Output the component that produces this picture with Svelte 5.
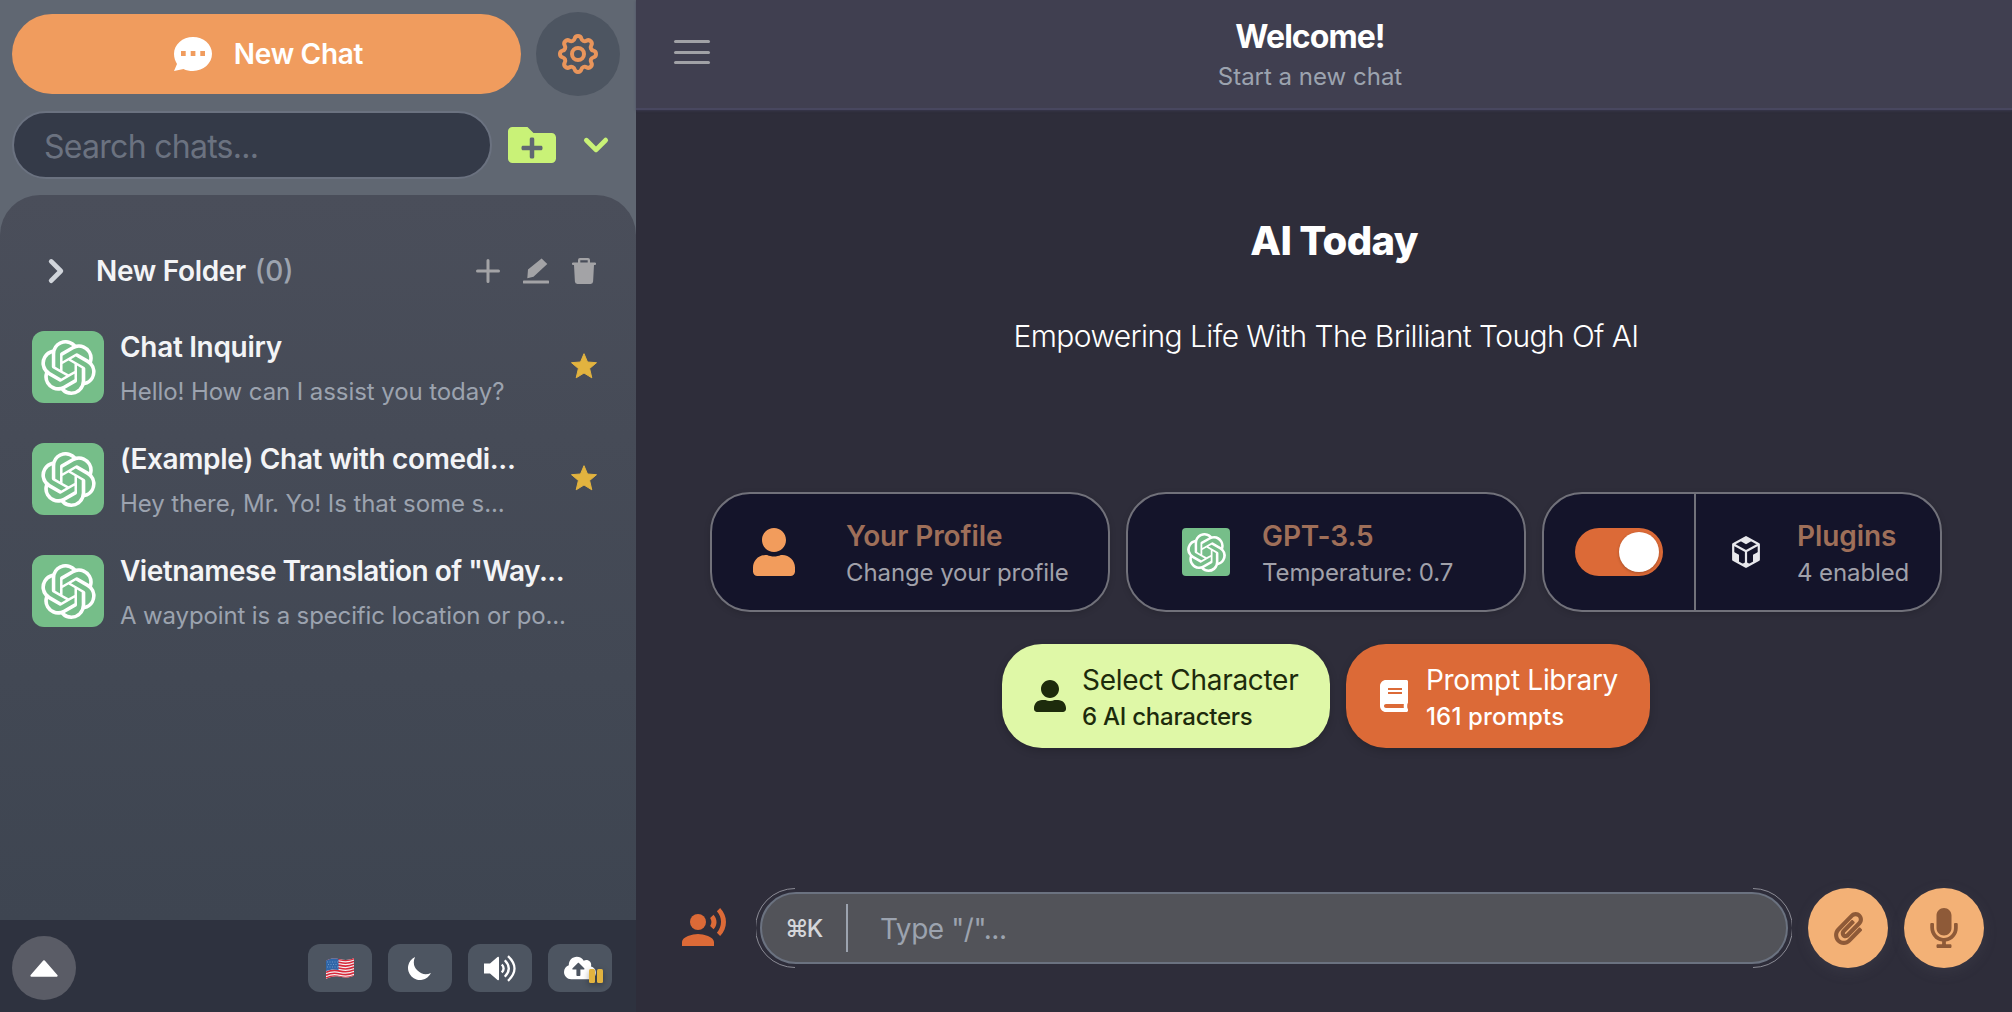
<script>
  const chats = [
    { title: 'Chat Inquiry', text: 'Hello! How can I assist you today?', starred: true, t: 't1', s: 's1' },
    { title: '(Example) Chat with comedi...', text: 'Hey there, Mr. Yo! Is that some s...', starred: true, t: 't2', s: 's2' },
    { title: 'Vietnamese Translation of "Way...', text: 'A waypoint is a specific location or po...', starred: false, t: 't3', s: 's3' }
  ];
  const knot =
    'M22.2819 9.8211a5.9847 5.9847 0 0 0-.5157-4.9108 6.0462 6.0462 0 0 0-6.5098-2.9A6.0651 6.0651 0 0 0 4.9807 4.1818a5.9847 5.9847 0 0 0-3.9977 2.9 6.0462 6.0462 0 0 0 .7427 7.0966 5.98 5.98 0 0 0 .511 4.9107 6.051 6.051 0 0 0 6.5146 2.9001A5.9847 5.9847 0 0 0 13.2599 24a6.0557 6.0557 0 0 0 5.7718-4.2058 5.9894 5.9894 0 0 0 3.9977-2.9001 6.0557 6.0557 0 0 0-.7475-7.0729zm-9.022 12.6081a4.4755 4.4755 0 0 1-2.8764-1.0408l.1419-.0804 4.7783-2.7582a.7948.7948 0 0 0 .3927-.6813v-6.7369l2.02 1.1686a.071.071 0 0 1 .038.052v5.5826a4.504 4.504 0 0 1-4.4945 4.4944zm-9.6607-4.1254a4.4708 4.4708 0 0 1-.5346-3.0137l.142.0852 4.783 2.7582a.7712.7712 0 0 0 .7806 0l5.8428-3.3685v2.3324a.0804.0804 0 0 1-.0332.0615L9.74 19.9502a4.4992 4.4992 0 0 1-6.1408-1.6464zM2.3408 7.8956a4.485 4.485 0 0 1 2.3655-1.9728V11.6a.7664.7664 0 0 0 .3879.6765l5.8144 3.3543-2.0201 1.1685a.0757.0757 0 0 1-.071 0l-4.8303-2.7865A4.504 4.504 0 0 1 2.3408 7.872zm16.5963 3.8558L13.1038 8.364 15.1192 7.2a.0757.0757 0 0 1 .071 0l4.8303 2.7913a4.4944 4.4944 0 0 1-.6765 8.1042v-5.6772a.79.79 0 0 0-.407-.667zm2.0107-3.0231l-.142-.0852-4.7735-2.7818a.7759.7759 0 0 0-.7854 0L9.409 9.2297V6.8974a.0662.0662 0 0 1 .0284-.0615l4.8303-2.7866a4.4992 4.4992 0 0 1 6.6802 4.66zM8.3065 12.863l-2.02-1.1638a.0804.0804 0 0 1-.038-.0567V6.0742a4.4992 4.4992 0 0 1 7.3757-3.4537l-.142.0805L8.704 5.459a.7948.7948 0 0 0-.3927.6813zm1.0976-2.3654l2.602-1.4998 2.6069 1.4998v2.9994l-2.5974 1.4997-2.6067-1.4997Z';
  const stripes = [0, 1, 2, 3, 4, 5, 6];
</script>

{#snippet logo(cls)}
  <span class="logo {cls}"><svg viewBox="0 0 24 24"><path fill="#fff" d={knot} /></svg></span>
{/snippet}

<div class="app">
  <aside>
    <div class="top">
      <button class="new">
        <svg class="bubble" viewBox="0 0 38 34"><path fill="#fff" fill-rule="evenodd" d="M19 0C8.500 0 0 7.500 0 16.800c0 4.200 1.400 7.600 3 10.200L0 34l9.500-2.100C12.200 33.200 15.400 34 19 34c10.500 0 19-7.700 19-17.200S29.500 0 19 0ZM7 14h4.700v5H7zM16.700 14h4.700v5h-4.700zM26.300 14H31v5h-4.700z" /></svg>
        <span>New Chat</span>
      </button>
      <button class="gear" aria-label="Settings">
        <svg viewBox="0 0 24 24" fill="none" stroke="#e9955b" stroke-width="2" stroke-linejoin="round"><path d="M10.325 4.317c.426-1.756 2.924-1.756 3.35 0a1.724 1.724 0 002.573 1.066c1.543-.94 3.31.826 2.37 2.37a1.724 1.724 0 001.065 2.572c1.756.426 1.756 2.924 0 3.35a1.724 1.724 0 00-1.066 2.573c.94 1.543-.826 3.31-2.37 2.37a1.724 1.724 0 00-2.572 1.065c-.426 1.756-2.924 1.756-3.35 0a1.724 1.724 0 00-2.573-1.066c-1.543.94-3.31-.826-2.37-2.37a1.724 1.724 0 00-1.065-2.572c-1.756-.426-1.756-2.924 0-3.35a1.724 1.724 0 001.066-2.573c-.94-1.543.826-3.31 2.37-2.37.996.608 2.296.07 2.572-1.065z" /><circle cx="12" cy="12" r="3" /></svg>
      </button>
    </div>
    <div class="find">
      <div class="search"><span>Search chats...</span></div>
      <svg class="folder" viewBox="0 64 512 384"><path fill="#c9f277" d="M464 128H272l-64-64H48C21.490 64 0 85.490 0 112v288c0 26.510 21.490 48 48 48h416c26.510 0 48-21.490 48-48V176c0-26.510-21.490-48-48-48zm-96 168c0 8.840-7.160 16-16 16h-72v72c0 8.840-7.160 16-16 16h-16c-8.840 0-16-7.160-16-16v-72h-72c-8.840 0-16-7.160-16-16v-16c0-8.840 7.160-16 16-16h72v-72c0-8.840 7.160-16 16-16h16c8.840 0 16 7.160 16 16v72h72c8.840 0 16 7.160 16 16v16z" /></svg>
      <svg class="down" viewBox="0 0 20 20"><path fill="#c9f277" d="M5.293 7.293a1 1 0 011.414 0L10 10.586l3.293-3.293a1 1 0 111.414 1.414l-4 4a1 1 0 01-1.414 0l-4-4a1 1 0 010-1.414z" /></svg>
    </div>

    <div class="panel">
      <div class="group">
        <svg class="right" viewBox="0 0 20 20"><path fill="#d1d5db" d="M7.293 14.707a1 1 0 010-1.414L10.586 10 7.293 6.707a1 1 0 011.414-1.414l4 4a1 1 0 010 1.414l-4 4a1 1 0 01-1.414 0z" /></svg>
        <span class="gname">New Folder</span><span class="count">(0)</span>
        <div class="tools">
          <svg width="24" height="24" viewBox="0 0 24 24"><path stroke="#a3a3a6" stroke-width="3" stroke-linecap="round" d="M12 1.500v21M1.500 12h21" /></svg>
          <svg width="26" height="26" viewBox="0 0 26 26"><path fill="#a3a3a6" d="M18.600.600 24.300 6 10.500 18.800 4.300 20.300 5 11.500zM1 22.500h24a1 1 0 0 1 0 3H1a1 1 0 0 1 0-3Z" /></svg>
          <svg width="24" height="26" viewBox="0 0 24 26"><path fill="#a3a3a6" fill-rule="evenodd" d="M6 2a2 2 0 0 1 2-2h8a2 2 0 0 1 2 2v2.500h5a1 1 0 0 1 0 2.500H1a1 1 0 0 1 0-2.500h5zM8.300 2.300v2.200h7.400V2.300zM2 7h20l-.9 16.600A2.500 2.500 0 0 1 18.600 26H5.400a2.500 2.500 0 0 1-2.500-2.400z" /></svg>
        </div>
      </div>
      {#each chats as c}
        <div class="chat">
          {@render logo('big')}
          <div class="words">
            <div class="title {c.t}">{c.title}</div>
            <div class="sub {c.s}">{c.text}</div>
          </div>
          {#if c.starred}
            <svg class="star" viewBox="0 0 26 26"><path fill="#e2b33f" stroke="#e2b33f" stroke-width="1" stroke-linejoin="round" d="m13 .7 3.500 8.300 9 .7-6.900 5.800 2.200 9.300L13 20l-7.800 4.800 2.200-9.300L.5 9.700l9-.7z" /></svg>
          {/if}
        </div>
      {/each}
    </div>

    <footer>
      <button class="up" aria-label="Expand"><svg width="28" height="17" viewBox="0 0 28 17"><path fill="#fff" stroke="#fff" stroke-width="2" stroke-linejoin="round" d="M14 1.200 26.600 15.700H1.400z" /></svg></button>
      <div class="minis">
        <button class="mini" aria-label="Language">
          <svg width="28" height="23" viewBox="0 0 28 23">
            <defs><clipPath id="flag"><path d="M0 3.500C5 1 9 1 14 2.200S23 3.400 28 1v17.500c-5 2.600-9 2.300-14 1.300S5 19.500 0 22z" /></clipPath></defs>
            <g clip-path="url(#flag)">
              <rect width="28" height="23" fill="#f4f1f2" />
              {#each stripes as i}
                <path fill="none" stroke="#d9283a" stroke-width="1.600" d="M0 {4 + i * 2.850}c5-2.500 9-2.500 14-1.300s9 1.200 14-1.200" />
              {/each}
              <path fill="#2f66a8" d="M0 0h12.500v13C8 12 4 12.500 0 14z" />
              <path stroke="#7ba3d2" stroke-width=".8" stroke-dasharray="1 1.500" d="M1 5h11M2 7.500h10M1 10h11" />
            </g>
          </svg>
        </button>
        <button class="mini" aria-label="Dark mode"><svg width="30" height="30" viewBox="0 0 20 20"><path fill="#fff" d="M17.293 13.293A8 8 0 016.707 2.707a8.001 8.001 0 1010.586 10.586z" /></svg></button>
        <button class="mini" aria-label="Sound">
          <svg width="33" height="27" viewBox="0 0 33 27"><path fill="#fff" d="M0 8.500h6L13.500 2Q15 1 15 3v21q0 2-1.500 1L6 18.500H0z" /><path fill="none" stroke="#fff" stroke-width="2.300" d="M17.800 9.500q3.600 4 0 8M20.800 5.200q8 8.300 0 16.600M24 1.200q13 12.300 0 24.600" /></svg>
        </button>
        <button class="mini cloud" aria-label="Cloud sync">
          <svg width="32" height="26" viewBox="0 0 640 512"><path fill="#fff" d="M537.6 226.6c4.1-10.7 6.4-22.4 6.4-34.6 0-53-43-96-96-96-19.7 0-38.1 6-53.3 16.200C367 64.200 315.300 32 256 32c-88.400 0-160 71.600-160 160 0 2.700.1 5.400.2 8.100C40.200 219.800 0 273.200 0 336c0 79.500 64.500 144 144 144h368c70.700 0 128-57.300 128-128 0-61.900-44-113.600-102.400-125.400zM393.400 288H328v112c0 8.800-7.200 16-16 16h-48c-8.800 0-16-7.200-16-16V288h-65.400c-14.300 0-21.400-17.200-11.300-27.400l105.400-105.400c6.200-6.200 16.400-6.200 22.600 0l105.400 105.400c10.100 10.100 2.900 27.400-11.300 27.400z" /></svg>
          <span class="pause"><i></i><i></i></span>
        </button>
      </div>
    </footer>
  </aside>

  <main>
    <header>
      <div class="burger"><i></i><i></i><i></i></div>
      <div class="heading">
        <div class="welcome">Welcome!</div>
        <div class="start">Start a new chat</div>
      </div>
    </header>

    <h1>AI Today</h1>
    <h2>Empowering Life With The Brilliant Tough Of AI</h2>

    <div class="cards">
      <div class="card profile">
        <svg width="42" height="48" viewBox="0 0 448 512"><path fill="#f29c5c" d="M224 256c70.700 0 128-57.300 128-128S294.700 0 224 0 96 57.300 96 128s57.300 128 128 128zm89.600 32h-16.700c-22.200 10.200-46.900 16-72.900 16s-50.600-5.800-72.900-16h-16.700C60.200 288 0 348.200 0 422.400V464c0 26.500 21.500 48 48 48h352c26.500 0 48-21.500 48-48v-41.600c0-74.200-60.200-134.400-134.400-134.400z" /></svg>
        <div><div class="ct">Your Profile</div><div class="cs">Change your profile</div></div>
      </div>
      <div class="card model">
        {@render logo('small')}
        <div><div class="ct">GPT-3.5</div><div class="cs">Temperature: 0.7</div></div>
      </div>
      <div class="card plugins">
        <div class="switch"><div class="track"><i></i></div></div>
        <div class="plug">
          <svg width="28" height="32" viewBox="0 0 28 32">
            <path fill="none" stroke="#e8e8ec" stroke-width="2.200" stroke-linejoin="round" d="M14 1.300 26.800 8.300v15.400L14 30.700 1.200 23.700V8.300zM1.200 8.300 14 15.300l12.800-7M14 15.300v15.400" />
            <path fill="#e8e8ec" d="M14 .5 20.500 4.500 17 6.500 14 8.200 11 6.500 7.500 4.500zM1 15.500l6 3.300v7.500L1 23.500zM27 15.500l-6 3.300v7.500l6-2.800zM14 26l4 2-4 3.500L10 28z" />
          </svg>
          <div><div class="ct">Plugins</div><div class="cs">4 enabled</div></div>
        </div>
      </div>
    </div>

    <div class="actions">
      <button class="act lime">
        <svg width="32" height="32" viewBox="0 0 512 512"><path fill="#1d2b0c" d="M256 288c79.500 0 144-64.500 144-144S335.500 0 256 0 112 64.500 112 144s64.500 144 144 144zm128 32h-55.100c-22.200 10.200-46.900 16-72.900 16s-50.600-5.800-72.900-16H128C57.300 320 0 377.300 0 448v16c0 26.500 21.500 48 48 48h416c26.500 0 48-21.500 48-48v-16c0-70.700-57.300-128-128-128z" /></svg>
        <span class="lines"><span class="at">Select Character</span><span class="as a2">6 AI characters</span></span>
      </button>
      <button class="act rust">
        <svg width="28" height="32" viewBox="0 0 448 512"><path fill="#fff" d="M448 360V24c0-13.300-10.700-24-24-24H96C43 0 0 43 0 96v320c0 53 43 96 96 96h328c13.300 0 24-10.700 24-24v-16c0-7.500-3.500-14.300-8.900-18.700-4.200-15.400-4.200-59.300 0-74.700 5.400-4.300 8.900-11.100 8.900-18.600zM128 134c0-3.300 2.700-6 6-6h212c3.300 0 6 2.700 6 6v20c0 3.300-2.700 6-6 6H134c-3.300 0-6-2.700-6-6v-20zm0 64c0-3.300 2.700-6 6-6h212c3.300 0 6 2.700 6 6v20c0 3.300-2.700 6-6 6H134c-3.300 0-6-2.700-6-6v-20zm253.400 250H96c-17.700 0-32-14.300-32-32 0-17.600 14.400-32 32-32h285.400c-1.900 17.100-1.900 46.900 0 64z" /></svg>
        <span class="lines"><span class="at">Prompt Library</span><span class="as a4">161 prompts</span></span>
      </button>
    </div>

    <div class="composer">
      <svg class="voice" width="48" height="48" viewBox="0 0 24 24" fill="#dc6a37"><circle cx="9" cy="9" r="4" /><path d="M9 15c-2.670 0-8 1.340-8 4v2h16v-2c0-2.660-5.330-4-8-4zm7.760-9.640l-1.680 1.690c.84 1.180.84 2.710 0 3.890l1.680 1.690c2.020-2.020 2.020-5.070 0-7.270zM20.070 2l-1.630 1.630c2.770 3.020 2.770 7.560 0 10.740L20.070 16c3.900-3.890 3.910-9.950 0-14z" /></svg>
      <div class="ring">
        <svg class="arc" width="40" height="80" viewBox="0 0 40 80"><path d="M39 .5A39.500 39.500 0 0 0 39 79.500" /></svg>
        <div class="input">
          <span class="key">⌘K</span><span class="bar"></span><span class="type">Type "/"...</span>
        </div>
        <svg class="arc" width="40" height="80" viewBox="0 0 40 80"><path d="M1 .5A39.500 39.500 0 0 1 1 79.500" /></svg>
      </div>
      <button class="round" aria-label="Attach"><svg width="29" height="33" viewBox="0 0 448 512"><path fill="#8e5a38" d="M43.246 466.142c-58.430-60.289-57.341-157.511 1.386-217.581L254.392 34c44.316-45.332 116.351-45.336 160.671 0 43.890 44.894 43.943 117.329 0 162.276L232.214 383.128c-29.855 30.537-78.633 30.111-107.982-.998-28.275-29.970-27.368-77.473 1.452-106.953l143.743-146.835c6.182-6.314 16.312-6.422 22.626-.241l22.861 22.379c6.315 6.182 6.422 16.312.241 22.626L171.427 319.927c-4.932 5.045-5.236 13.428-.648 18.292 4.372 4.634 11.245 4.711 15.688.165l182.849-186.851c19.613-20.062 19.613-52.725-.011-72.798-19.189-19.627-49.957-19.637-69.154 0L90.390 293.295c-34.763 35.560-35.299 93.120-1.191 128.313 34.010 35.093 88.985 35.137 123.058.286l172.060-175.999c6.177-6.319 16.307-6.433 22.626-.256l22.877 22.364c6.319 6.177 6.434 16.307.256 22.626l-172.060 175.998c-59.576 60.938-155.943 60.216-214.770-.485z" /></svg></button>
      <button class="round" aria-label="Record"><svg width="28" height="40" viewBox="0 0 352 512"><path fill="#8e5a38" d="M176 352c53.020 0 96-42.980 96-96V96c0-53.020-42.980-96-96-96S80 42.980 80 96v160c0 53.020 42.980 96 96 96zm160-160h-16c-8.840 0-16 7.160-16 16v48c0 74.800-64.490 134.820-140.790 127.380C96.710 376.890 48 317.110 48 250.300V208c0-8.840-7.160-16-16-16H16c-8.840 0-16 7.160-16 16v40.160c0 89.640 63.970 169.550 152 181.690V464H96c-8.840 0-16 7.160-16 16v16c0 8.840 7.160 16 16 16h160c8.840 0 16-7.160 16-16v-16c0-8.840-7.160-16-16-16h-56v-33.770C285.710 418.470 352 344.900 352 256v-48c0-8.840-7.160-16-16-16z" /></svg></button>
    </div>
  </main>
</div>

<style>
  :global(body) { margin: 0; background: #2e2d3a; }
  .app { display: flex; width: 2012px; height: 1012px; overflow: hidden; font-family: Inter, 'Liberation Sans', sans-serif; color: #fff; white-space: nowrap; }
  .app :global(*) { box-sizing: border-box; }
  button { border: 0; padding: 0; margin: 0; font: inherit; color: inherit; display: flex; align-items: center; justify-content: center; flex: none; }
  svg { display: block; flex: none; }

  aside { width: 636px; flex: none; display: flex; flex-direction: column; background: #606772; }
  .top { display: flex; align-items: center; gap: 15px; height: 84px; margin-top: 12px; padding-left: 12px; }
  .new { width: 509px; height: 80px; border-radius: 40px; background: #f09c5e; font-size: 28px; font-weight: 600; padding-left: 4px; letter-spacing: -.3px; }
  .new span { margin-left: 22px; }
  .bubble { width: 38px; height: 34px; }
  .gear { width: 84px; height: 84px; border-radius: 50%; background: #4d5561; }
  .gear svg { width: 48px; height: 48px; }
  .find { display: flex; align-items: center; height: 68px; margin-top: 15px; padding-left: 12px; }
  .search { width: 480px; height: 68px; border: 2px solid #6b7280; border-radius: 34px; background: #343a48; color: #6b7280; font-size: 32px; letter-spacing: -.72px; display: flex; align-items: center; padding: 2px 0 0 30px; }
  .folder { width: 48px; height: 36px; margin-left: 16px; }
  .down { width: 48px; height: 48px; margin-left: 16px; }

  .panel { margin-top: 16px; height: 725px; border-radius: 40px 40px 0 0; background: linear-gradient(#4a4e5a, #3e4551); padding: 20px 40px 0 32px; }
  .group { display: flex; align-items: center; height: 112px; margin-bottom: -16px; }
  .right { width: 48px; height: 48px; }
  .gname { margin-left: 16px; font-size: 28px; font-weight: 600; letter-spacing: -.32px; color: #f3f4f6; }
  .count { margin-left: 9px; font-size: 28px; font-weight: 500; color: #9ca3af; }
  .tools { margin-left: auto; display: flex; align-items: center; gap: 23px; }
  .chat { display: flex; align-items: center; height: 112px; }
  .logo { display: flex; align-items: center; justify-content: center; flex: none; background: #76be89; }
  .big { width: 72px; height: 72px; border-radius: 12px; }
  .big svg { width: 55px; height: 55px; }
  .small { width: 48px; height: 48px; border-radius: 4px; }
  .small svg { width: 39px; height: 39px; }
  .words { margin-left: 16px; padding-top: 4px; }
  .title { font-size: 28px; font-weight: 600; line-height: 44px; color: #f3f4f6; }
  .sub { font-size: 24px; line-height: 45px; color: #9ca3af; }
  .t1 { letter-spacing: -.32px; }
  .t2 { letter-spacing: -.36px; }
  .t3 { letter-spacing: -.5px; }
  .s1, .s2 { letter-spacing: -.08px; }
  .s3 { letter-spacing: -.13px; }
  .star { width: 26px; height: 26px; margin: -2px -1px 0 auto; }

  footer { height: 92px; background: #2e323f; display: flex; align-items: center; justify-content: space-between; padding: 4px 24px 0 12px; }
  .up { width: 64px; height: 64px; border-radius: 50%; background: #5a5c66; }
  .minis { display: flex; gap: 16px; }
  .mini { width: 64px; height: 48px; border-radius: 12px; background: #4d5561; position: relative; }
  .cloud { padding-right: 1px; }
  .pause { position: absolute; left: 41px; top: 25px; display: flex; gap: 2px; filter: drop-shadow(0 2px 3px rgba(0, 0, 0, .35)); }
  .pause i { width: 6px; height: 14px; border-radius: 1.500px; background: #e2b33f; }

  main { flex: 1; display: flex; flex-direction: column; align-items: center; background: #2e2d3a; }
  header { width: 100%; height: 110px; flex: none; background: #403f50; border-bottom: 2px solid #48475f; display: flex; padding: 17px 102px 0 38px; position: relative; box-shadow: 0 1px 2px rgba(64, 63, 90, .6); }
  .burger { width: 36px; display: flex; flex-direction: column; gap: 7.500px; padding-top: 23px; }
  .burger i { height: 3px; border-radius: 1.500px; background: #a1a1a6; }
  .heading { flex: 1; text-align: center; }
  .welcome { font-size: 32px; font-weight: 700; line-height: 40px; letter-spacing: -.95px; }
  .start { font-size: 24px; line-height: 40px; color: #9ca3af; }
  h1 { margin: 107px 0 0 20px; font-size: 40px; line-height: 48px; font-weight: 800; letter-spacing: -.65px; }
  h2 { margin: 51px 0 0 4px; font-size: 30px; line-height: 40px; font-weight: 300; letter-spacing: -.58px; }

  .cards { display: flex; gap: 16px; margin: 136px 0 0 4px; }
  .card { width: 400px; height: 120px; border: 2px solid #71717a; border-radius: 40px; background: #14142a; display: flex; align-items: center; box-shadow: 0 2px 6px rgba(0, 0, 0, .15); }
  .profile { padding-left: 41px; gap: 51px; }
  .model { padding-left: 54px; gap: 32px; }
  .ct { font-size: 28px; line-height: 40px; font-weight: 600; letter-spacing: -.08px; color: #9f6f59; }
  .cs { font-size: 24px; line-height: 33px; letter-spacing: -.1px; color: #a1a1aa; }
  .switch { width: 152px; height: 100%; border-right: 2px solid #71717a; padding-left: 31px; display: flex; align-items: center; }
  .track { width: 88px; height: 48px; border-radius: 24px; background: #dc6a37; padding: 4px; display: flex; justify-content: flex-end; }
  .track i { width: 40px; height: 40px; border-radius: 50%; background: #fff; box-shadow: 0 1px 3px rgba(0, 0, 0, .25); }
  .plug { display: flex; align-items: center; padding-left: 36px; gap: 37px; }

  .actions { display: flex; gap: 16px; margin: 32px 0 0 4px; }
  .act { height: 104px; border-radius: 40px; justify-content: flex-start; text-align: left; box-shadow: 0 3px 8px rgba(0, 0, 0, .18); }
  .lime { width: 328px; padding-left: 32px; gap: 16px; background: #dff8a7; color: #1d2b0c; }
  .rust { width: 304px; padding-left: 34px; gap: 18px; background: #dc6a37; }
  .lines { display: flex; flex-direction: column; padding-top: 1px; }
  .at { font-size: 28px; line-height: 40px; letter-spacing: -.3px; }
  .as { font-size: 24px; line-height: 33px; font-weight: 500; }
  .a2 { letter-spacing: -.25px; }
  .a4 { letter-spacing: .15px; }

  .composer { width: 100%; display: flex; align-items: center; margin-top: 140px; padding-left: 44px; }
  .ring { margin-left: 28px; width: 1036px; height: 80px; display: flex; justify-content: space-between; position: relative; }
  .arc path { fill: none; stroke: #8b8b95; stroke-width: 1; }
  .input { position: absolute; inset: 4px; border: 2px solid #6b7280; border-radius: 36px; background: #525359; display: flex; align-items: center; }
  .key { margin-left: 23px; width: 61px; font-size: 24px; font-weight: 500; letter-spacing: -2px; color: #d4d6da; }
  .bar { width: 2px; height: 48px; background: #9ca3af; }
  .type { margin-left: 32px; font-size: 28px; letter-spacing: -.45px; color: #9ca3af; padding-top: 1px; }
  .round { width: 80px; height: 80px; margin-left: 16px; border-radius: 50%; background: #f3b176; box-shadow: 0 4px 14px rgba(100, 100, 110, .18); }
</style>
